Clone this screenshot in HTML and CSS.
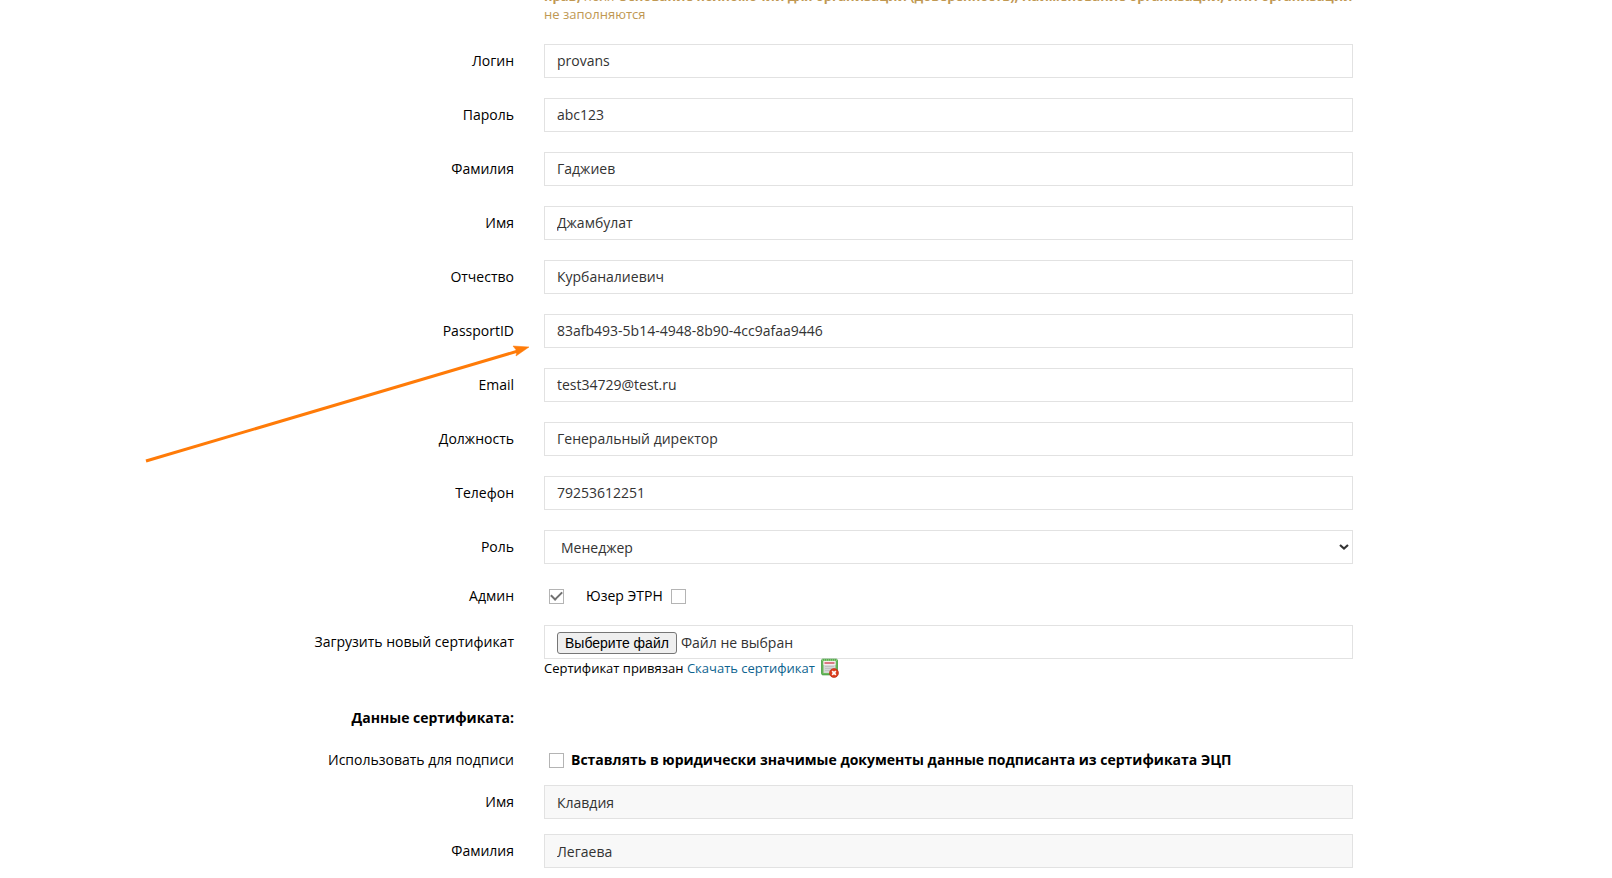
FILE: index.html
```html
<!DOCTYPE html>
<html lang="ru">
<head>
<meta charset="utf-8">
<title>Редактирование пользователя</title>
<link rel="stylesheet" href="styles.css">
</head>
<body>
<form class="form">
  <div class="row row-notice">
    <p class="notice"><span class="notice-line"><b>прав,</b> поля <b>Основание полномочий для организации (доверенность), Наименование организации, ИНН организации</b></span> не заполняются</p>
  </div>
  <div class="row"><label class="label" for="login">Логин</label><input class="field" id="login" type="text" value="provans"></div>
  <div class="row"><label class="label" for="password">Пароль</label><input class="field" id="password" type="text" value="abc123"></div>
  <div class="row"><label class="label" for="surname">Фамилия</label><input class="field" id="surname" type="text" value="Гаджиев"></div>
  <div class="row"><label class="label" for="name">Имя</label><input class="field" id="name" type="text" value="Джамбулат"></div>
  <div class="row"><label class="label" for="patronymic">Отчество</label><input class="field" id="patronymic" type="text" value="Курбаналиевич"></div>
  <div class="row"><label class="label" for="passport">PassportID</label><input class="field" id="passport" type="text" value="83afb493-5b14-4948-8b90-4cc9afaa9446"></div>
  <div class="row"><label class="label" for="email">Email</label><input class="field" id="email" type="text" value="test34729@test.ru"></div>
  <div class="row"><label class="label" for="position">Должность</label><input class="field" id="position" type="text" value="Генеральный директор"></div>
  <div class="row"><label class="label" for="phone">Телефон</label><input class="field" id="phone" type="text" value="79253612251"></div>
  <div class="row"><label class="label" for="role">Роль</label>
    <div class="select-wrap">
      <select class="field select" id="role"><option>Менеджер</option></select>
      <svg class="chevron" viewBox="0 0 10 6" aria-hidden="true"><path d="M1 1l4 3.5L9 1" fill="none" stroke="#333" stroke-width="2.2"/></svg>
    </div>
  </div>
  <div class="row row-checks"><label class="label" for="admin">Админ</label>
    <div class="checks">
      <input class="check" id="admin" type="checkbox" checked>
      <label class="check-label" for="etrn">Юзер ЭТРН</label>
      <input class="check" id="etrn" type="checkbox">
    </div>
  </div>
  <div class="row row-file"><label class="label" for="choose">Загрузить новый сертификат</label>
    <div class="upload">
      <div class="field file"><button class="choose" id="choose" type="button">Выберите файл</button><span>Файл не выбран</span></div>
      <div class="attached">
        <span>Сертификат привязан <a class="link" href="#">Скачать сертификат</a></span>
        <button class="remove" type="button" aria-label="Удалить сертификат">
          <svg class="remove-icon" viewBox="0 0 18 20" aria-hidden="true">
            <rect x="0.7" y="1.2" width="15.6" height="15.6" rx="1" fill="#6dbb5d" stroke="#3f9a3a"/>
            <path d="M1 2h15" stroke="#a9dc9b" stroke-dasharray="1 1"/>
            <rect x="2.5" y="3" width="12" height="12" fill="#d6d6d6"/>
            <path d="M2.500 3h12v4h-12z" fill="#f6eeee"/>
            <path d="M3.5 5h10" stroke="#cf4653" stroke-width="1.4"/>
            <path d="M4 8.500h9M4 10.500h7M4 12.500h5" stroke="#c2c2c2"/>
            <circle cx="13" cy="15" r="4.500" fill="#dc3c1c" stroke="#b42a12" stroke-width="0.6"/>
            <path d="M11.200 13.200l3.600 3.600M14.800 13.200l-3.600 3.600" stroke="#fff" stroke-width="1.700"/>
          </svg>
        </button>
      </div>
    </div>
  </div>
  <div class="row row-heading"><h2 class="label heading">Данные сертификата:</h2></div>
  <div class="row row-sign"><label class="label" for="sign">Использовать для подписи</label>
    <div class="checks">
      <input class="check" id="sign" type="checkbox">
      <label class="sign-label" for="sign">Вставлять в юридически значимые документы данные подписанта из сертификата ЭЦП</label>
    </div>
  </div>
  <div class="row row-cert"><label class="label" for="cert-name">Имя</label><input class="field readonly" id="cert-name" type="text" value="Клавдия" readonly></div>
  <div class="row row-cert"><label class="label" for="cert-surname">Фамилия</label><input class="field readonly" id="cert-surname" type="text" value="Легаева" readonly></div>
</form>
<svg class="pointer" viewBox="0 0 390 124" aria-hidden="true">
  <path d="M6 119L378 9" stroke="#ff7b08" stroke-width="3" fill="none"/>
  <path d="M389 5L373 4l4 5-1 5z" fill="#ff7b08" stroke="#ff7b08" stroke-width="0.500"/>
</svg>
</body>
</html>
```

FILE: styles.css
```css
* {
  box-sizing: border-box;
}

body {
  margin: 0;
  position: relative;
  overflow: hidden;
  background: #fff;
  color: #000;
  font: 14px/20px "Open Sans", "Noto Sans", sans-serif;
}

.form {
  padding: 0 259px 10px;
}

.row {
  display: grid;
  grid-template-columns: 255fr 809fr;
  column-gap: 30px;
  align-items: start;
  margin-bottom: 20px;
}

.label {
  padding-top: 7px;
  text-align: right;
}

.row-notice {
  margin-top: -13px;
  margin-bottom: 21px;
}

.notice {
  grid-column: 2;
  min-width: 0;
  margin: 0;
  color: #c09853;
  font-size: 13px;
  line-height: 18px;
}

.notice-line {
  white-space: nowrap;
}

.field {
  width: 100%;
  height: 34px;
  padding: 0 12px 2px;
  border: 1px solid #e2e2e2;
  border-radius: 0;
  background: #fff;
  color: #333;
  font: inherit;
}

.select-wrap {
  position: relative;
}

.select {
  display: block;
  appearance: none;
  padding: 1px 16px 0;
}

.chevron {
  position: absolute;
  top: 14px;
  right: 4px;
  width: 10px;
  height: 6px;
  pointer-events: none;
}

.row-checks {
  min-height: 41px;
  margin-bottom: 0;
}

.row-checks .label {
  padding-top: 2px;
}

.checks {
  display: flex;
  align-items: center;
  padding: 2px 5px 0;
}

.check {
  display: grid;
  place-items: center;
  flex: none;
  appearance: none;
  width: 15px;
  height: 15px;
  margin: 0;
  border: 1px solid #b4b4b4;
  background: #fff;
}

.check:checked::before {
  content: "";
  width: 9px;
  height: 5px;
  margin-bottom: 3px;
  border: solid #707070;
  border-width: 0 0 2px 2px;
  transform: rotate(-45deg);
}

.check-label {
  margin: 0 8px 0 22px;
}

.row-file {
  margin-bottom: 24px;
}

.file {
  display: flex;
  align-items: center;
  gap: 4px;
  padding: 2px 12px 0;
}

.choose {
  height: 22px;
  padding: 0 7px;
  border: 1px solid #767676;
  border-radius: 3px;
  background: #efefef;
  color: #000;
  font: 14px "Liberation Sans", Arial, sans-serif;
}

.attached {
  display: flex;
  align-items: center;
  gap: 6px;
  height: 18px;
  font-size: 13px;
}

.link {
  color: #0d638f;
  text-decoration: none;
}

.remove {
  padding: 0;
  border: 0;
  background: none;
}

.remove-icon {
  display: block;
  width: 18px;
  height: 20px;
}

.row-heading {
  margin-bottom: 15px;
}

.heading {
  margin: 0;
  font-size: 14px;
  font-weight: 700;
}

.row-sign {
  margin-bottom: 15px;
}

.row-sign .checks {
  padding-top: 7px;
}

.sign-label {
  margin-left: 7px;
  font-weight: 700;
}

.row-cert {
  margin-bottom: 15px;
}

.readonly {
  padding-bottom: 0;
  background: #f8f8f8;
}

.pointer {
  position: absolute;
  top: 342px;
  left: 140px;
  width: 390px;
  height: 124px;
  pointer-events: none;
}
```
